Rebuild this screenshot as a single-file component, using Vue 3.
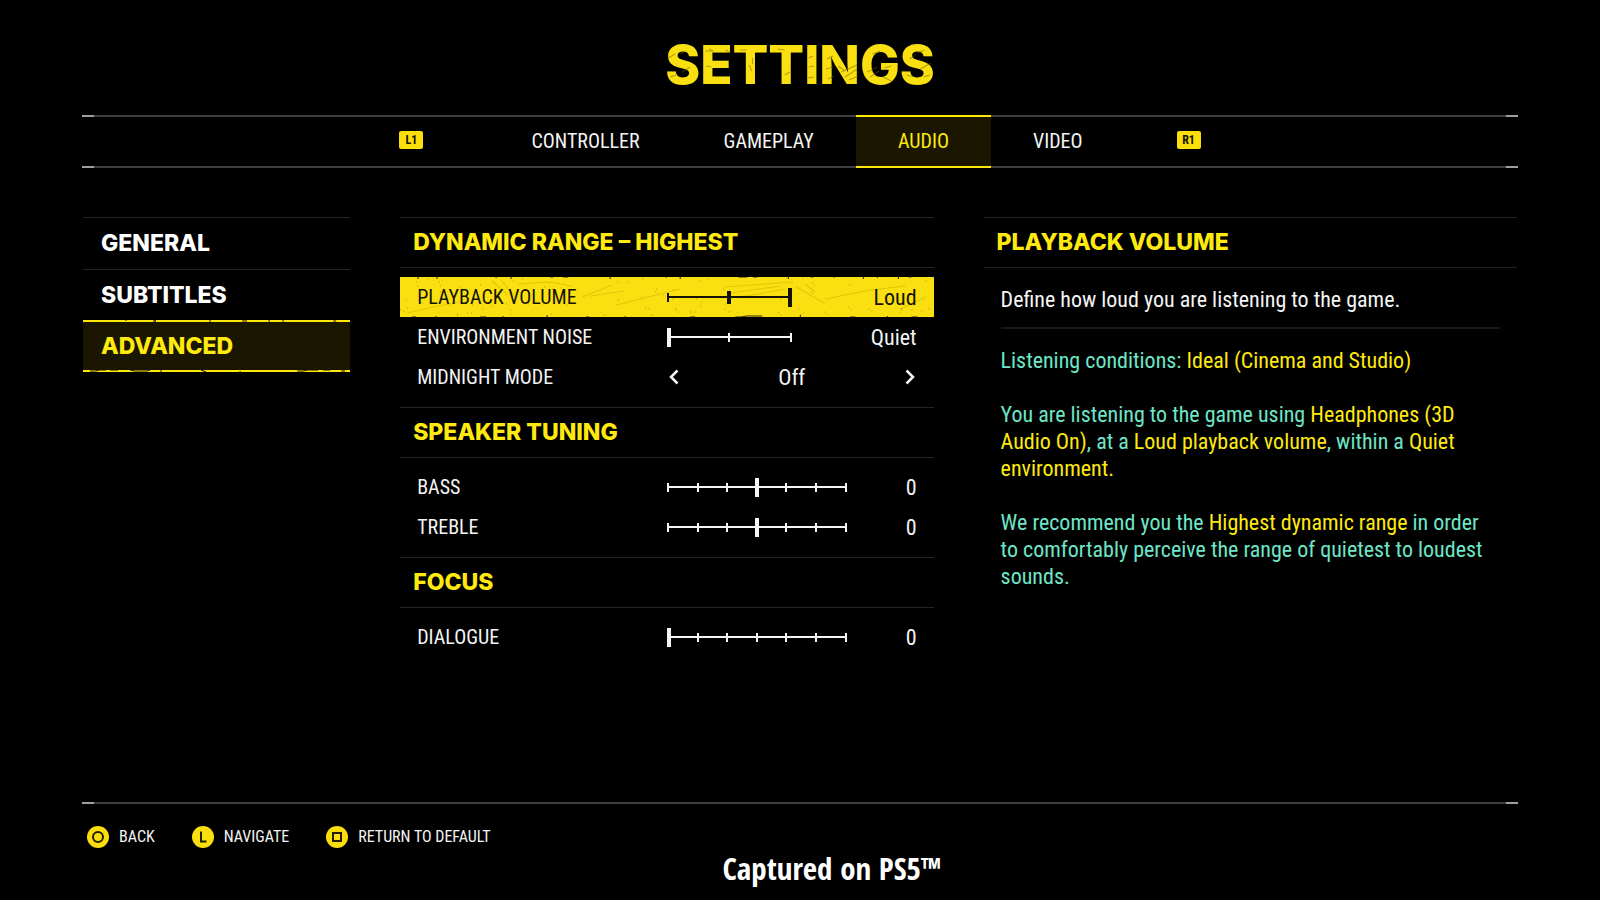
<template>
  <div class="settings-page">
    <header class="page-header">
      <h1 class="page-title">
        SETTINGS
        <svg class="scratches" viewBox="0 0 268 38" preserveAspectRatio="none" aria-hidden="true">
          <path v-for="(d, i) in titleScratches" :key="i" :d="d" />
        </svg>
      </h1>
    </header>

    <nav class="tab-bar ruled ruled-bottom">
      <button class="shoulder" type="button" @click="moveTab(-1)">L1</button>
      <div class="tabs">
        <button
          v-for="tab in tabs"
          :key="tab"
          type="button"
          class="tab"
          :class="{ active: tab === activeTab }"
          @click="activeTab = tab"
        >{{ tab }}</button>
      </div>
      <button class="shoulder" type="button" @click="moveTab(1)">R1</button>
    </nav>

    <main class="columns">
      <aside class="side-menu">
        <button
          v-for="item in menu"
          :key="item"
          type="button"
          class="menu-item"
          :class="{ active: item === activeItem }"
          @click="activeItem = item"
        >
          {{ item }}
          <svg v-if="item === activeItem" class="edge-wear" viewBox="0 0 267 52" preserveAspectRatio="none" aria-hidden="true">
            <path d="M43 0v1M70 1h3M72 0v2M127 0v2M159 1h5M186 0v2M199 1h2M250 1h3" />
            <path d="M7 51h6l3-1h7M27 50h8M47 50l5 1h12l3-1M78 50v2M118 50l5 2M157 51v1M214 51h6l4-1h11M240 50h7M258 51h4" />
          </svg>
        </button>
      </aside>

      <div class="options">
        <section v-for="group in groups" :key="group.title" class="group">
          <h2 class="section-title">{{ group.title }}</h2>
          <div class="rows">
            <div
              v-for="row in group.rows"
              :key="row.id"
              class="row"
              :class="{ selected: row.id === selected }"
              @click="selected = row.id"
            >
              <svg v-if="row.id === selected" class="texture" viewBox="0 0 533 40" preserveAspectRatio="none" aria-hidden="true">
                <path v-for="(d, i) in scratches" :key="'s' + i" class="scratch" :d="d" />
                <path class="specks" :d="specks" />
                <path class="nicks" d="M18 0v2M37 0v2M96 0v1M111 0v2M150 0h3M163 0h5M210 0v2M266 0v1M280 0v2M338 0h9M353 0h4M388 0v2M410 0h3M433 0h2M463 0v2M477 0v1M498 0v2M508 0h3M12 40h4M36 39v1M80 40h6M103 39v1M147 40v-2M186 40h3M225 39v1M290 40h5M335 40h6l5-1h16M400 40v-2M450 40h5M487 39v1M511 40h6" />
              </svg>
              <label class="row-label" :for="row.id">{{ row.label }}</label>
              <div v-if="row.type === 'slider'" class="control">
                <div class="slider" :class="{ short: row.steps === 3 }">
                  <span
                    v-for="n in row.steps"
                    :key="n"
                    class="tick"
                    :class="{ marked: n - 1 === row.mark }"
                  ></span>
                  <input
                    :id="row.id"
                    v-model.number="row.position"
                    class="range"
                    type="range"
                    min="0"
                    :max="row.steps - 1"
                    step="1"
                  >
                </div>
                <output class="value" :for="row.id">{{ valueOf(row) }}</output>
              </div>
              <div v-else class="control">
                <button class="arrow" type="button" aria-label="Previous" @click="toggle(row)">
                  <svg viewBox="0 0 10 16"><path d="M8.500 1.500 2 8l6.500 6.500" /></svg>
                </button>
                <output :id="row.id" class="choice">{{ row.value }}</output>
                <button class="arrow" type="button" aria-label="Next" @click="toggle(row)">
                  <svg viewBox="0 0 10 16"><path d="M1.500 1.500 8 8l-6.500 6.500" /></svg>
                </button>
              </div>
            </div>
          </div>
        </section>
      </div>

      <section class="details">
        <h2 class="section-title">PLAYBACK VOLUME</h2>
        <div class="details-body">
          <p class="summary">Define how loud you are listening to the game.</p>
          <p>Listening conditions: <em>Ideal (Cinema and Studio)</em></p>
          <p>
            You are listening to the game using <em>Headphones (3D Audio On)</em>, at a
            <em>Loud playback volume</em>, within a <em>Quiet environment.</em>
          </p>
          <p>
            We recommend you the <em>Highest dynamic range</em> in order to comfortably
            perceive the range of quietest to loudest sounds.
          </p>
        </div>
      </section>
    </main>

    <footer class="page-footer ruled">
      <div class="hints">
        <button class="hint" type="button">
          <svg viewBox="0 0 22 22"><circle cx="11" cy="11" r="11" /><circle class="line" cx="11" cy="11" r="5" /></svg>
          BACK
        </button>
        <button class="hint" type="button">
          <svg viewBox="0 0 22 22"><circle cx="11" cy="11" r="11" /><path class="line" d="M9 5.500v10h5.500" /></svg>
          NAVIGATE
        </button>
        <button class="hint" type="button">
          <svg viewBox="0 0 22 22"><circle cx="11" cy="11" r="11" /><path class="line" d="M7 7h8v8H7z" /></svg>
          RETURN TO DEFAULT
        </button>
      </div>
      <p class="capture">Captured on PS5™</p>
    </footer>
  </div>
</template>

<script setup>
import { ref } from 'vue'

const tabs = ['CONTROLLER', 'GAMEPLAY', 'AUDIO', 'VIDEO']
const activeTab = ref('AUDIO')

const menu = ['GENERAL', 'SUBTITLES', 'ADVANCED']
const activeItem = ref('ADVANCED')

const selected = ref('playback')

const groups = ref([
  {
    title: 'DYNAMIC RANGE – HIGHEST',
    rows: [
      { id: 'playback', label: 'PLAYBACK VOLUME', type: 'slider', steps: 3, position: 2, mark: 1, names: ['Quiet', 'Medium', 'Loud'] },
      { id: 'noise', label: 'ENVIRONMENT NOISE', type: 'slider', steps: 3, position: 0, names: ['Quiet', 'Medium', 'Loud'] },
      { id: 'midnight', label: 'MIDNIGHT MODE', type: 'choice', value: 'Off' }
    ]
  },
  {
    title: 'SPEAKER TUNING',
    rows: [
      { id: 'bass', label: 'BASS', type: 'slider', steps: 7, position: 3, base: 3 },
      { id: 'treble', label: 'TREBLE', type: 'slider', steps: 7, position: 3, base: 3 }
    ]
  },
  {
    title: 'FOCUS',
    rows: [
      { id: 'dialogue', label: 'DIALOGUE', type: 'slider', steps: 7, position: 0, base: 0 }
    ]
  }
])

const valueOf = (row) => (row.names ? row.names[row.position] : row.position - row.base)

const toggle = (row) => {
  row.value = row.value === 'Off' ? 'On' : 'Off'
}

const moveTab = (step) => {
  const index = tabs.indexOf(activeTab.value) + step
  activeTab.value = tabs[Math.min(Math.max(index, 0), tabs.length - 1)]
}

// worn paint on the selected row
const scratches = [
  'M7 36 33 30 60 25',
  'M92 4 108 18M101 3l14 17',
  'M182 20 212 8M190 19l34-5',
  'M216 28 280 12',
  'M118 7 150 5l22 4',
  'M325 10 392 5M330 16l50-7M340 20l45-8',
  'M396 10 424 26M405 7l10 8',
  'M425 22 470 13 505 9',
  'M500 32 526 20'
]

// small seeded generator keeps the specks the same on every render
let seed = 17
const random = () => {
  seed = (seed * 16807) % 2147483647
  return seed / 2147483647
}
const specks = Array.from({ length: 110 }, (_, i) => {
  const x = Math.round(random() * 530)
  const y = Math.round(i % 3 ? random() * 38 : 32 + random() * 6)
  return `M${x} ${y}h1`
}).join('')

const titleScratches = [
  'M3 12l7-4M5 31l6-2M15 8l4-2M17 26l8-5',
  'M40 5h8M44 3l4 2M60 4l4 2M41 20l5 1',
  'M84 19l2 6M87 12v6M75 4h6',
  'M112 3l7 1M119 29l5-3',
  'M143 12l4-2M143 21l5-1M142 32l6-1',
  'M161 13l6-3M160 23l7-2M162 33l6-3M175 26l16-7M179 31l12-8M183 34l9-4M172 20l7 5',
  'M201 26l10-5M204 31l9-6M206 8l8-3M218 22l7-2M217 31l8 4',
  'M240 29l8 2M243 13l6-4M254 23l10-6M257 31l6-2M251 7l7-3'
]
</script>

<style>
body {
  background: #000;
}
</style>

<style scoped>
.settings-page {
  min-height: 100vh;
  box-sizing: border-box;
  padding: 0 82px;
  display: flex;
  flex-direction: column;
  background: #000;
  color: #f4f4f4;
  font-family: "Roboto Condensed", "Liberation Sans Narrow", "Liberation Sans", sans-serif;
  font-size: 22px;
  line-height: 27px;
}

button {
  border: 0;
  padding: 0;
  background: none;
  color: inherit;
  font: inherit;
  cursor: pointer;
}

h1,
h2,
p {
  margin: 0;
}

.page-header {
  display: flex;
  justify-content: center;
  padding: 35px 0 20px;
}

.page-title {
  position: relative;
  color: #fae010;
  font-family: Inter, sans-serif;
  font-size: 53px;
  font-weight: 800;
  line-height: 60px;
}

.scratches {
  position: absolute;
  top: 11px;
  left: 0;
  width: 100%;
  height: 38px;
  fill: none;
  stroke: #6b5e00;
  stroke-opacity: 0.5;
}

/* thin rules with a brighter piece at both ends */
.ruled {
  --rule: linear-gradient(90deg, #a0a0a0 12px, #3e3e3e 12px calc(100% - 12px), #a0a0a0 calc(100% - 12px));
  background: var(--rule) top / 100% 2px no-repeat;
}

.ruled-bottom {
  background: var(--rule) top / 100% 2px no-repeat, var(--rule) bottom / 100% 2px no-repeat;
}

.tab-bar {
  height: 53px;
  display: flex;
  justify-content: center;
  align-items: center;
}

.tabs {
  align-self: stretch;
  display: flex;
  margin: 0 52px 0 66px;
}

.tab {
  padding: 0 42px;
  border-top: 2px solid transparent;
  border-bottom: 2px solid transparent;
  font-size: 20px;
}

.tab.active {
  border-color: #ffe70a;
  background: #1a1600;
  color: #ffea10;
}

.shoulder {
  width: 24px;
  height: 18px;
  margin-bottom: 3px;
  border-radius: 2px;
  background: #fbdf0c;
  color: #141200;
  font-size: 12px;
  font-weight: 700;
  line-height: 18px;
}

.columns {
  flex: 1;
  display: grid;
  grid-template-columns: 267fr 533fr 533fr;
  column-gap: 50px;
  align-items: start;
  padding: 49px 1px 24px;
}

.side-menu {
  display: flex;
  flex-direction: column;
}

.menu-item {
  position: relative;
  height: 52px;
  padding: 0 18px;
  border-top: 1px solid #242424;
  text-align: left;
  color: #fff;
}

.menu-item,
.section-title {
  font-family: Inter, sans-serif;
  font-size: 23px;
  font-weight: 800;
  line-height: 49px;
}

.menu-item.active {
  margin-top: -1px;
  border-top: 2px solid #ffe70a;
  border-bottom: 2px solid #ffe70a;
  background: #1a1600;
  color: #ffea10;
}

.edge-wear {
  position: absolute;
  top: -2px;
  left: 0;
  width: 100%;
  height: 52px;
  fill: none;
  stroke: #1a1600;
}

.section-title {
  padding: 0 13px;
  border-top: 1px solid #242424;
  border-bottom: 1px solid #242424;
  color: #ffea10;
}

.rows {
  padding: 9px 0 10px;
}

.row {
  position: relative;
  display: grid;
  grid-template-columns: 1fr 1fr;
  align-items: center;
  height: 40px;
  padding: 0 17px;
}

.row.selected {
  background: #fae010;
  color: #141200;
}

.texture {
  position: absolute;
  inset: 0;
  width: 100%;
  height: 100%;
  fill: none;
}

.scratch {
  stroke: #a28d00;
  stroke-opacity: 0.3;
}

.specks {
  stroke: #8b7900;
  stroke-opacity: 0.6;
}

.nicks {
  stroke: #2a2400;
}

.row-label,
.control {
  position: relative;
}

.row-label {
  font-size: 20px;
}

.control {
  display: flex;
  align-items: center;
  justify-content: space-between;
}

.slider {
  position: relative;
  width: 72%;
  height: 19px;
  display: flex;
  align-items: center;
  justify-content: space-between;
  background: linear-gradient(currentColor, currentColor) center / 100% 2px no-repeat;
}

.slider.short {
  width: 50%;
}

.tick {
  width: 2px;
  height: 9px;
  background: currentColor;
}

.tick.marked {
  width: 4px;
  height: 13px;
}

.range {
  position: absolute;
  inset: 0;
  width: 100%;
  height: 100%;
  margin: 0;
  appearance: none;
  background: none;
  color: inherit;
  cursor: pointer;
}

.range::-webkit-slider-thumb {
  appearance: none;
  width: 4px;
  height: 19px;
  background: currentColor;
}

.arrow {
  width: 14px;
  height: 24px;
  display: flex;
  align-items: center;
  justify-content: center;
}

.arrow svg {
  width: 10px;
  height: 16px;
  fill: none;
  stroke: currentColor;
  stroke-width: 2.5;
}

.details-body {
  padding: 18px 17px 0;
  color: #6ee6c8;
}

.details-body p {
  margin-bottom: 27px;
}

.details-body .summary {
  margin-bottom: 18px;
  padding-bottom: 14px;
  border-bottom: 2px solid #191919;
  color: #f4f4f4;
}

.details-body em {
  color: #ffea10;
  font-style: normal;
}

.page-footer {
  padding: 23px 0 13px;
}

.hints {
  display: flex;
  gap: 37px;
  padding: 0 5px;
  font-size: 16px;
  line-height: 24px;
}

.hint {
  display: flex;
  align-items: center;
  gap: 10px;
}

.hint svg {
  width: 22px;
  height: 22px;
  fill: #fbdf0c;
}

.hint .line {
  fill: none;
  stroke: #241f00;
  stroke-width: 2;
}

.capture {
  padding-left: 64px;
  text-align: center;
  color: #fff;
  font-family: "Open Sans Condensed", "Noto Sans Condensed", "Roboto Condensed", "Liberation Sans Narrow", sans-serif;
  font-size: 31px;
  font-weight: 700;
  line-height: 38px;
}
</style>
